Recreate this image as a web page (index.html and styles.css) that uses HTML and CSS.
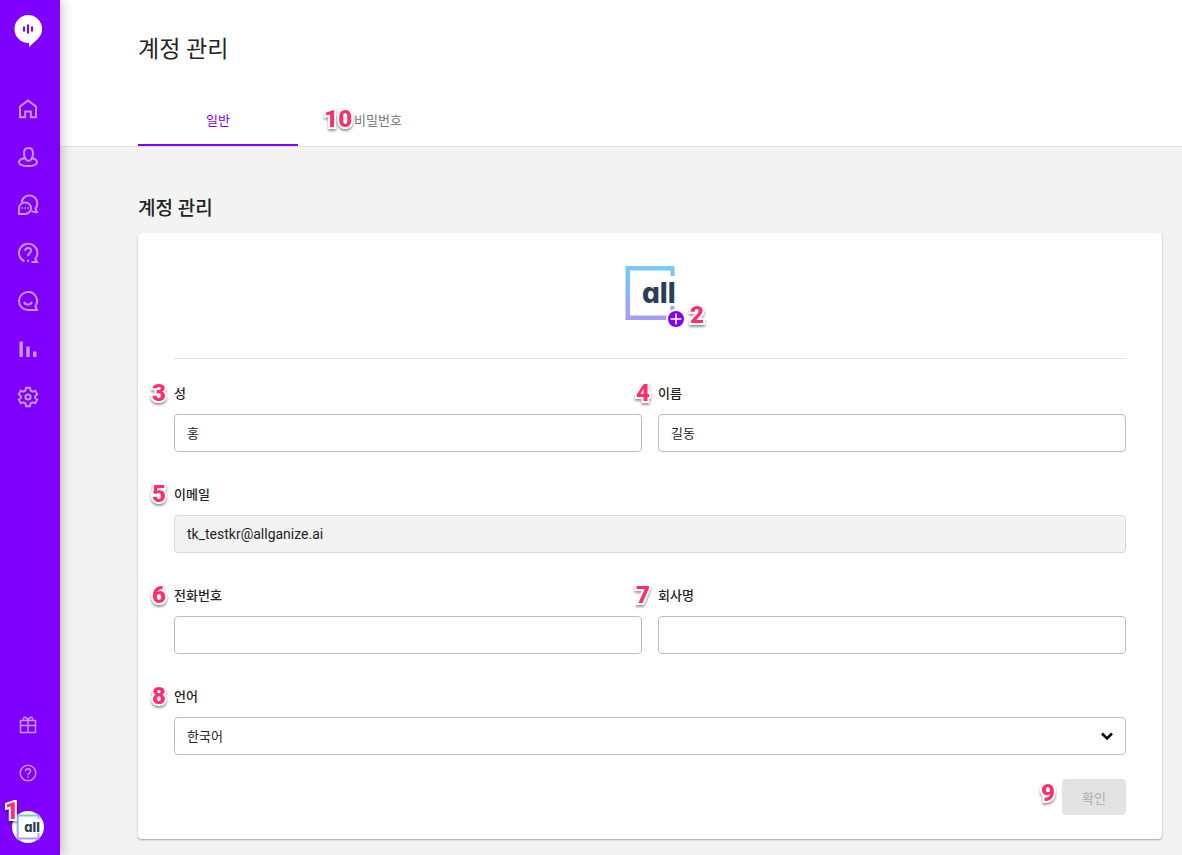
FILE: index.html
```html
<!doctype html>
<html lang="ko">
<head>
  <meta charset="UTF-8">
  <meta name="viewport" content="width=device-width, initial-scale=1.0">
  <title>계정 관리</title>
  <link rel="stylesheet" href="styles.css">
</head>
<body>
  <svg class="defs" aria-hidden="true">
    <defs>
      <linearGradient id="frame" x1="0" y1="0" x2="0" y2="1">
        <stop offset="0" stop-color="#74cbfb"/>
        <stop offset="1" stop-color="#a79bf8"/>
      </linearGradient>
      <symbol id="all-logo" viewBox="0 0 56 56">
        <path d="M52.5 11V1H3.5V55H52.5V41H48.5V50.5H8V5.5H48.5V11Z" fill="url(#frame)"/>
        <text class="logo-text" x="20" y="38">all</text>
      </symbol>
    </defs>
  </svg>
  <div class="layout">
    <aside class="sidebar">
      <a href="#" class="brand" aria-label="홈">
        <svg width="28" height="32" viewBox="0 0 28 32">
          <path d="M14 0A14 14 0 1 0 15 28V32L24 23.800A14 14 0 0 0 14 0Z" fill="#fff"/>
          <path d="M10 11.500V16.500M14 9.500V18.500M18 11.500V16.500" stroke="#7f00ff" stroke-width="2"/>
        </svg>
      </a>
      <nav class="nav">
        <a href="#" class="nav-item" aria-label="대시보드">
          <svg viewBox="0 0 24 24"><path d="M4 20.200V9.500L12 3.500 20 9.500V20.200H14.800V14.500H9.200V20.200Z"/></svg>
        </a>
        <a href="#" class="nav-item" aria-label="사용자">
          <svg viewBox="0 0 24 24"><path d="M12.500 3C9.800 3 8 5 8 8.200 8 11.800 10 16 12.500 16S17 11.800 17 8.200C17 5 15.200 3 12.500 3Z"/><path d="M9 13.200C5.200 13.600 3 15.200 3 17.200 3 19.600 6.500 21 12 21S21 19.600 21 17.200C21 15.200 19 13.600 15.800 13.200"/></svg>
        </a>
        <a href="#" class="nav-item" aria-label="대화">
          <svg viewBox="0 0 24 24"><path d="M3 21V15.200A6 5.800 0 1 1 9 21Z"/><path d="M5.600 9.200A7.900 7.900 0 1 1 19.400 15.500L21 19.200C18.800 19.400 17 18.900 15.600 18.200"/><path class="dots" d="M5.400 15H7M8.300 15H9.900M11.200 15H12.800"/></svg>
        </a>
        <a href="#" class="nav-item" aria-label="질문">
          <svg viewBox="0 0 24 24"><path d="M8.500 20.400A9.200 9.200 0 1 1 19.300 17.800L21 21H15.500"/><path d="M9.200 9.700C9.300 6.200 15 6.300 15 9.700 15 11.900 12 12.200 12 15.300M12 18.800V21"/></svg>
        </a>
        <a href="#" class="nav-item" aria-label="피드백">
          <svg viewBox="0 0 24 24"><path d="M12 3A9 9 0 1 0 12 21H21L19.400 17.200A9 9 0 0 0 12 3Z"/><path d="M8 12.800C9 16.600 15 16.600 16 12.800"/></svg>
        </a>
        <a href="#" class="nav-item" aria-label="통계">
          <svg viewBox="0 0 24 24"><path class="bars" d="M5.200 4.500V20M12 9.500V20M18.800 14.500V20"/></svg>
        </a>
        <a href="#" class="nav-item" aria-label="설정">
          <svg viewBox="0 0 24 24"><path d="M10.100 2.800H13.900L14.600 5.500 16.500 6.600 19.200 5.800 21.200 9.200 19.200 11.100V12.900L21.200 14.800 19.200 18.200 16.500 17.400 14.600 18.500 13.900 21.200H10.100L9.400 18.500 7.500 17.400 4.800 18.200 2.800 14.800 4.800 12.900V11.100L2.800 9.200 4.800 5.800 7.500 6.600 9.400 5.500Z"/><circle cx="12" cy="12" r="2.600"/></svg>
        </a>
      </nav>
      <nav class="nav nav-bottom">
        <a href="#" class="nav-item" aria-label="새 소식">
          <svg viewBox="0 0 24 24"><path class="thin" d="M4.500 7.500H19.500V12.500H4.500ZM4.500 12.500V19.500H19.500V12.500M12 7.500V19.500M12 7.500C10.500 3 6.800 3.500 7.500 7.500M12 7.500C13.500 3 17.200 3.500 16.500 7.500"/></svg>
        </a>
        <a href="#" class="nav-item" aria-label="도움말">
          <svg viewBox="0 0 24 24"><circle class="thin" cx="12" cy="12" r="7.800"/><path class="thin" d="M9.500 10.200C9.600 6.900 14.500 7 14.500 10.100 14.500 12 12 12.100 12 14.200M12 15.500V17"/></svg>
        </a>
      </nav>
      <a href="#" class="avatar" aria-label="내 계정">
        <svg width="26" height="26"><use href="#all-logo"/></svg>
        <span class="marker">1</span>
      </a>
    </aside>
    <div class="page">
      <header class="header">
        <h1>계정 관리</h1>
        <nav class="tabs">
          <a href="#" class="tab active">일반</a>
          <a href="#" class="tab"><span class="anchor"><span class="marker">10</span>비밀번호</span></a>
        </nav>
      </header>
      <main class="content">
        <h2>계정 관리</h2>
        <form class="card">
          <div class="photo">
            <div class="photo-box">
              <svg width="56" height="56"><use href="#all-logo"/></svg>
              <button type="button" class="photo-add" aria-label="사진 변경">
                <svg width="16" height="16" viewBox="0 0 16 16"><path d="M8 2.500V13.500M2.500 8H13.500" stroke="#fff" stroke-width="1.600"/></svg>
              </button>
              <span class="marker">2</span>
            </div>
          </div>
          <div class="fields">
            <div class="field">
              <label for="last-name"><span class="marker">3</span>성</label>
              <input type="text" id="last-name" value="홍">
            </div>
            <div class="field">
              <label for="first-name"><span class="marker">4</span>이름</label>
              <input type="text" id="first-name" value="길동">
            </div>
            <div class="field wide">
              <label for="email"><span class="marker">5</span>이메일</label>
              <input type="email" id="email" value="tk_testkr@allganize.ai" disabled>
            </div>
            <div class="field">
              <label for="phone"><span class="marker">6</span>전화번호</label>
              <input type="tel" id="phone">
            </div>
            <div class="field">
              <label for="company"><span class="marker">7</span>회사명</label>
              <input type="text" id="company">
            </div>
            <div class="field wide">
              <label for="language"><span class="marker">8</span>언어</label>
              <div class="select">
                <select id="language">
                  <option>한국어</option>
                </select>
                <svg class="chevron" width="14" height="10" viewBox="0 0 14 10"><path d="M2 2.500L7 7.500 12 2.500"/></svg>
              </div>
            </div>
          </div>
          <div class="actions">
            <div class="anchor">
              <span class="marker">9</span>
              <button type="submit" class="submit" disabled>확인</button>
            </div>
          </div>
        </form>
      </main>
    </div>
  </div>
</body>
</html>
```
FILE: styles.css
```css
* {
  box-sizing: border-box;
}
body {
  margin: 0;
  font-family: Roboto, "Noto Sans CJK KR", sans-serif;
  font-size: 13px;
  line-height: 20px;
  color: #232323;
  background-color: #f3f3f3;
}
a {
  text-decoration: none;
}
svg {
  display: block;
}
.defs {
  position: absolute;
  width: 0;
  height: 0;
}
.logo-text {
  font-family: Inter, sans-serif;
  font-size: 28px;
  font-weight: 800;
  font-feature-settings: "cv11";
  fill: #2c3e57;
}
.layout {
  display: flex;
  min-height: 100vh;
}

/* sidebar */
.sidebar {
  position: sticky;
  top: 0;
  z-index: 1;
  display: flex;
  flex: none;
  flex-direction: column;
  align-items: center;
  width: 60px;
  height: 100vh;
  padding: 15px 4px 12px 0;
  background-color: #7f00ff;
  box-shadow: 0 0 12px rgba(0, 0, 0, 0.3);
}
.brand {
  margin-bottom: 38px;
}
.nav-item {
  display: flex;
  justify-content: center;
  align-items: center;
  height: 48px;
}
.nav-item svg {
  width: 24px;
  height: 24px;
  fill: none;
  stroke: #c795ff;
  stroke-width: 2;
}
.nav-item .thin {
  stroke-width: 1.5;
}
.nav-item .dots {
  stroke-width: 1.5;
}
.nav-item .bars {
  stroke-width: 3.5;
}
.nav-bottom {
  margin-top: auto;
}
.avatar {
  position: relative;
  display: flex;
  justify-content: center;
  align-items: center;
  width: 32px;
  height: 32px;
  margin-top: 14px;
  border-radius: 50%;
  background-color: #fff;
}
.avatar .marker {
  top: -10px;
  right: 25px;
}

/* numbered callouts */
.anchor {
  position: relative;
}
.marker {
  position: absolute;
  top: 0;
  right: 100%;
  font-family: Roboto, sans-serif;
  font-size: 24px;
  font-weight: 900;
  line-height: 20px;
  color: #ff2d6f;
  -webkit-text-stroke: 4px #fff;
  paint-order: stroke fill;
  filter: drop-shadow(0 2px 1px rgba(0, 0, 0, 0.4));
}

/* header */
.page {
  flex: 1;
  min-width: 0;
}
.header {
  padding: 33px 20px 0 78px;
  border-bottom: 1px solid #e2e2e2;
  background-color: #fff;
}
h1 {
  margin: 0 0 29px;
  font-size: 23px;
  font-weight: 400;
  line-height: 34px;
}
.tabs {
  display: flex;
}
.tab {
  display: flex;
  justify-content: center;
  align-items: center;
  width: 160px;
  height: 50px;
  padding-top: 2px;
  border-bottom: 2px solid transparent;
  color: #777;
}
.tab.active {
  border-bottom-color: #7f00ff;
  color: #7f00ff;
}
.tab .marker {
  top: -2px;
  margin-right: 2px;
}

/* content */
.content {
  padding: 47px 20px 16px 78px;
}
h2 {
  margin: 0 0 9px;
  font-size: 19px;
  font-weight: 500;
  line-height: 30px;
}
.card {
  padding: 32px 36px 24px;
  border-radius: 4px;
  background-color: #fff;
  box-shadow: 0 1px 2px rgba(0, 0, 0, 0.35);
}
.photo {
  display: flex;
  justify-content: center;
  padding-bottom: 37px;
  border-bottom: 1px solid #e2e2e2;
}
.photo-box {
  position: relative;
}
.photo-add {
  position: absolute;
  right: -8px;
  bottom: -8px;
  padding: 0;
  border: 2px solid #fff;
  border-radius: 50%;
  background-color: #7f00ff;
}
.photo-box .marker {
  right: -26px;
  bottom: -4px;
  top: auto;
}
.fields {
  display: grid;
  grid-template-columns: 1fr 1fr;
  gap: 32px 16px;
  padding-top: 24px;
}
.field {
  display: flex;
  flex-direction: column;
  gap: 9px;
}
.wide {
  grid-column: 1 / -1;
}
label {
  position: relative;
  align-self: flex-start;
  font-weight: 500;
  line-height: 22px;
}
label .marker {
  margin-right: 8px;
}
input,
select {
  width: 100%;
  height: 38px;
  padding: 0 12px;
  border: 1px solid #bdbdbd;
  border-radius: 4px;
  font-family: inherit;
  font-size: 13px;
  color: #232323;
  background-color: #fff;
}
input[type="text"] {
  padding-bottom: 2px;
}
input[type="email"] {
  font-size: 14px;
}
input:disabled {
  border-color: #d8d8d8;
  background-color: #f3f3f3;
}
.select {
  position: relative;
}
select {
  display: block;
  appearance: none;
}
.chevron {
  position: absolute;
  top: 14px;
  right: 12px;
  fill: none;
  stroke: #000;
  stroke-width: 2.5;
  pointer-events: none;
}
.actions {
  display: flex;
  justify-content: flex-end;
  padding-top: 24px;
}
.submit {
  width: 64px;
  height: 36px;
  border: 0;
  border-radius: 4px;
  font-family: inherit;
  font-size: 13px;
  font-weight: 500;
  color: #b5b5b5;
  background-color: #e3e3e3;
}
.actions .marker {
  top: 4px;
  margin-right: 7px;
}
```
